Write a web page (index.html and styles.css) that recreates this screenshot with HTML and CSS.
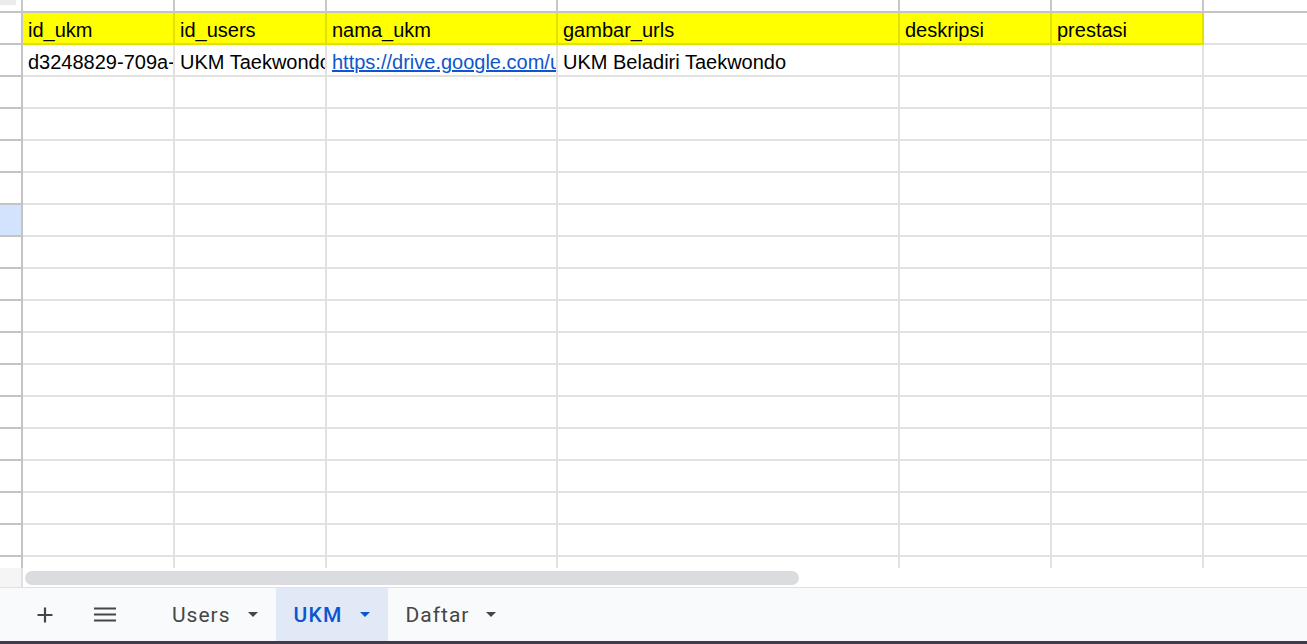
FILE: index.html
```html
<!DOCTYPE html>
<html>
<head>
<meta charset="utf-8">
<link rel="stylesheet" href="styles.css">
</head>
<body>
<div class="app">
  <div class="grid">
    <div class="row colhead">
      <div class="cell rh"><div class="corner"></div></div>
      <div class="cell"></div><div class="cell"></div><div class="cell"></div><div class="cell"></div><div class="cell"></div><div class="cell"></div><div class="cell last"></div>
    </div>
    <div class="row">
      <div class="cell rh"></div>
      <div class="cell hdr">id_ukm</div>
      <div class="cell hdr">id_users</div>
      <div class="cell hdr">nama_ukm</div>
      <div class="cell hdr">gambar_urls</div>
      <div class="cell hdr">deskripsi</div>
      <div class="cell hdr">prestasi</div>
      <div class="cell"></div>
    </div>
    <div class="row">
      <div class="cell rh"></div>
      <div class="cell">d3248829-709a-</div>
      <div class="cell">UKM Taekwondo</div>
      <div class="cell"><span class="link">https://drive.google.com/u</span></div>
      <div class="cell">UKM Beladiri Taekwondo</div>
      <div class="cell"></div>
      <div class="cell"></div>
      <div class="cell"></div>
    </div>
    <div class="row"><div class="cell rh"></div><div class="cell"></div><div class="cell"></div><div class="cell"></div><div class="cell"></div><div class="cell"></div><div class="cell"></div><div class="cell"></div></div>
    <div class="row"><div class="cell rh"></div><div class="cell"></div><div class="cell"></div><div class="cell"></div><div class="cell"></div><div class="cell"></div><div class="cell"></div><div class="cell"></div></div>
    <div class="row"><div class="cell rh"></div><div class="cell"></div><div class="cell"></div><div class="cell"></div><div class="cell"></div><div class="cell"></div><div class="cell"></div><div class="cell"></div></div>
    <div class="row"><div class="cell rh"></div><div class="cell"></div><div class="cell"></div><div class="cell"></div><div class="cell"></div><div class="cell"></div><div class="cell"></div><div class="cell"></div></div>
    <div class="row"><div class="cell rh selected"></div><div class="cell"></div><div class="cell"></div><div class="cell"></div><div class="cell"></div><div class="cell"></div><div class="cell"></div><div class="cell"></div></div>
    <div class="row"><div class="cell rh"></div><div class="cell"></div><div class="cell"></div><div class="cell"></div><div class="cell"></div><div class="cell"></div><div class="cell"></div><div class="cell"></div></div>
    <div class="row"><div class="cell rh"></div><div class="cell"></div><div class="cell"></div><div class="cell"></div><div class="cell"></div><div class="cell"></div><div class="cell"></div><div class="cell"></div></div>
    <div class="row"><div class="cell rh"></div><div class="cell"></div><div class="cell"></div><div class="cell"></div><div class="cell"></div><div class="cell"></div><div class="cell"></div><div class="cell"></div></div>
    <div class="row"><div class="cell rh"></div><div class="cell"></div><div class="cell"></div><div class="cell"></div><div class="cell"></div><div class="cell"></div><div class="cell"></div><div class="cell"></div></div>
    <div class="row"><div class="cell rh"></div><div class="cell"></div><div class="cell"></div><div class="cell"></div><div class="cell"></div><div class="cell"></div><div class="cell"></div><div class="cell"></div></div>
    <div class="row"><div class="cell rh"></div><div class="cell"></div><div class="cell"></div><div class="cell"></div><div class="cell"></div><div class="cell"></div><div class="cell"></div><div class="cell"></div></div>
    <div class="row"><div class="cell rh"></div><div class="cell"></div><div class="cell"></div><div class="cell"></div><div class="cell"></div><div class="cell"></div><div class="cell"></div><div class="cell"></div></div>
    <div class="row"><div class="cell rh"></div><div class="cell"></div><div class="cell"></div><div class="cell"></div><div class="cell"></div><div class="cell"></div><div class="cell"></div><div class="cell"></div></div>
    <div class="row"><div class="cell rh"></div><div class="cell"></div><div class="cell"></div><div class="cell"></div><div class="cell"></div><div class="cell"></div><div class="cell"></div><div class="cell"></div></div>
    <div class="row"><div class="cell rh"></div><div class="cell"></div><div class="cell"></div><div class="cell"></div><div class="cell"></div><div class="cell"></div><div class="cell"></div><div class="cell"></div></div>
    <div class="row"><div class="cell rh"></div><div class="cell"></div><div class="cell"></div><div class="cell"></div><div class="cell"></div><div class="cell"></div><div class="cell"></div><div class="cell"></div></div>
    <div class="row"><div class="cell rh"></div><div class="cell"></div><div class="cell"></div><div class="cell"></div><div class="cell"></div><div class="cell"></div><div class="cell"></div><div class="cell"></div></div>
  </div>

  <div class="hscroll">
    <div class="hscroll-corner"></div>
    <div class="hscroll-track"><div class="thumb"></div></div>
  </div>

  <div class="tabbar">
    <div class="tool plus">
      <svg width="16" height="16" viewBox="0 0 16 16"><path d="M8 0.5V15.5M0.5 8H15.5" stroke="#444746" stroke-width="2.2" fill="none"/></svg>
    </div>
    <div class="tool menu">
      <svg width="22" height="15" viewBox="0 0 22 15"><path d="M0 1.5H22M0 7.5H22M0 13.5H22" stroke="#444746" stroke-width="2" fill="none"/></svg>
    </div>
    <div class="tabs">
      <div class="tab"><span>Users</span><svg class="caret" width="10" height="5" viewBox="0 0 10 5"><path d="M0 0H10L5 5Z" fill="#444746"/></svg></div>
      <div class="tab active"><span>UKM</span><svg class="caret" width="10" height="5" viewBox="0 0 10 5"><path d="M0 0H10L5 5Z" fill="#0b57d0"/></svg></div>
      <div class="tab"><span>Daftar</span><svg class="caret" width="10" height="5" viewBox="0 0 10 5"><path d="M0 0H10L5 5Z" fill="#444746"/></svg></div>
    </div>
  </div>
  <div class="taskbar"></div>
</div>
</body>
</html>
```

FILE: styles.css
```css
html, body {
  margin: 0;
  padding: 0;
  background: #ffffff;
}

body {
  width: 1307px;
  height: 644px;
  overflow: hidden;
  font-family: "Liberation Sans", Arial, sans-serif;
}

.app {
  display: flex;
  flex-direction: column;
  height: 644px;
}

.grid {
  height: 568px;
  flex: none;
  overflow: hidden;
}

.row {
  display: grid;
  grid-template-columns: 23px 152px 152px 231px 342px 152px 152px 1fr;
  height: 32px;
}

.cell {
  box-sizing: border-box;
  border-right: 2px solid #e1e1e1;
  border-bottom: 2px solid #e1e1e1;
  padding: 5px 0 0 5px;
  line-height: 25px;
  font-size: 20px;
  color: #000000;
  white-space: nowrap;
  overflow: hidden;
}

.cell:last-child {
  border-right: none;
}

.rh {
  border-right-color: #c4c4c4;
  border-bottom-color: #c4c4c4;
  padding: 0;
}

.rh.selected {
  background: #d3e3fd;
}

.colhead {
  height: 13px;
}

.colhead .cell {
  border-right-color: #c7c7c7;
  border-bottom-color: #c4c4c4;
  padding: 0;
}

.corner {
  width: 16px;
  height: 5px;
  background: #ebebeb;
}

.hdr {
  background: #ffff00;
  border-right-color: #e2e200;
  border-bottom-color: #e2e200;
}

.link {
  color: #1155cc;
  text-decoration: underline;
}

.hscroll {
  height: 19px;
  flex: none;
  display: flex;
}

.hscroll-corner {
  width: 21px;
  background: #f5f5f5;
  border-right: 2px solid #e1e1e1;
}

.hscroll-track {
  flex: 1;
  padding: 3px 0 0 2px;
}

.thumb {
  width: 774px;
  height: 14px;
  border-radius: 7px;
  background: #dadce0;
}

.tabbar {
  height: 53px;
  flex: none;
  border-top: 1px solid #e0e0e0;
  background: #f9fafc;
  display: flex;
  align-items: stretch;
}

.tool {
  width: 40px;
  display: flex;
  align-items: center;
  justify-content: center;
}

.tool.plus {
  margin-left: 25px;
}

.tool.menu {
  margin-left: 20px;
}

.tabs {
  display: flex;
  margin-left: 29px;
}

.tab {
  display: flex;
  align-items: center;
  gap: 17px;
  padding: 0 18px;
  font-family: Roboto, "Open Sans", sans-serif;
  font-weight: 400;
  font-size: 21px;
  letter-spacing: 1px;
  color: #444746;
}

.tab.active {
  background: #e1e9f7;
  color: #0b57d0;
  font-weight: 500;
  letter-spacing: 1.2px;
}

.caret {
  display: block;
}

.taskbar {
  height: 3px;
  flex: none;
  background: #433a4c;
}
```
